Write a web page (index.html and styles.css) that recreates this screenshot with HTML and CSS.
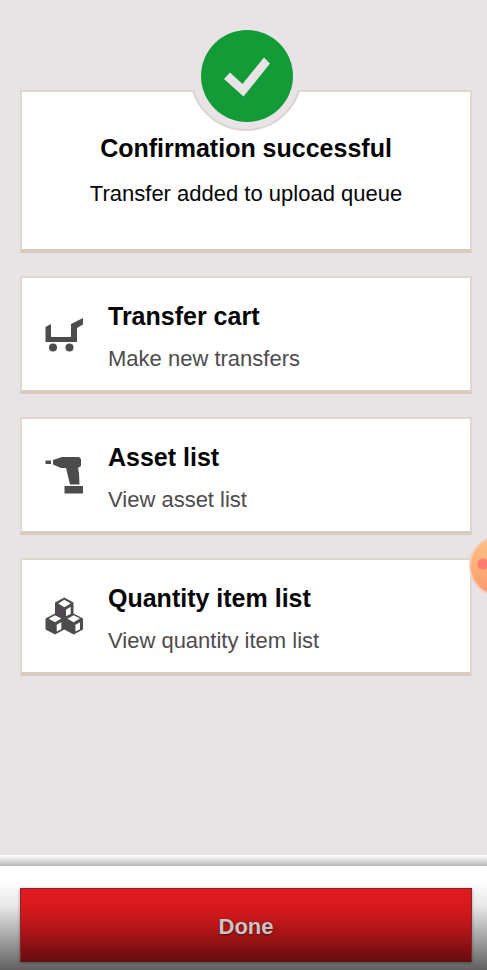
FILE: index.html
```html
<!DOCTYPE html>
<html lang="en">
<head>
<meta charset="utf-8">
<meta name="viewport" content="width=device-width, initial-scale=1">
<title>Confirmation</title>
<link rel="stylesheet" href="styles.css">
</head>
<body>
<main class="content">
  <section class="card confirmation">
    <svg class="badge" viewBox="0 0 114 114" aria-hidden="true">
      <defs><clipPath id="notch"><rect x="0" y="72" width="114" height="42"/></clipPath></defs>
      <circle cx="57" cy="57" r="55" fill="#e8e4e5"/>
      <circle cx="57" cy="57" r="55" fill="none" stroke="#ddd3cf" stroke-width="2" clip-path="url(#notch)"/>
      <circle cx="58" cy="58" r="46" fill="#129b37"/>
      <path d="M35 61L41 54.500L53.500 66L75 39.500L81 45.500L54.500 78.500Z" fill="#e8e4e5"/>
    </svg>
    <h1 class="title">Confirmation successful</h1>
    <p class="message">Transfer added to upload queue</p>
  </section>
  <a class="card option" href="#cart">
    <svg class="icon" viewBox="0 0 40 40" aria-hidden="true">
      <path d="M1.500 13L7 10V23H27V10L39 4V10.500L33 14V28H1.500Z"/>
      <circle cx="9" cy="33.500" r="4"/><circle cx="25.500" cy="33.500" r="4"/>
    </svg>
    <span class="text"><strong class="title">Transfer cart</strong><span class="detail">Make new transfers</span></span>
  </a>
  <a class="card option" href="#assets">
    <svg class="icon" viewBox="0 0 40 40" aria-hidden="true">
      <path d="M1.500 5.500H7V9H1.500ZM9 5L18 2H35L37 4V11L34 13L35 18L35.500 29.500H26L22 13H17L9 9.500ZM20.500 31H39V38.500H20.500Z"/>
    </svg>
    <span class="text"><strong class="title">Asset list</strong><span class="detail">View asset list</span></span>
  </a>
  <a class="card option" href="#quantities">
    <svg class="icon" viewBox="0 0 40 40" aria-hidden="true">
      <path d="M20.300 1.500L29.500 6.500V17.500L39 22.500V33.500L29.700 38.500L20.300 33.500L11 38.500L1.500 33.500V22.500L11 17.500V6.500Z"/>
      <path class="face" d="M20.300 3.800L26.700 7.500L20.300 11.200L14.300 7.500ZM22 13.800L26.700 10.800V17.800L22 20.200ZM11 19.200L17.300 22.500L11 26.200L4.700 22.800ZM12.700 28.800L17.300 26.200V33.200L12.700 35.500ZM29.700 19.200L36 22.500L29.700 26.200L23.400 22.800ZM31.400 28.800L36 26.200V33.200L31.400 35.500Z"/>
    </svg>
    <span class="text"><strong class="title">Quantity item list</strong><span class="detail">View quantity item list</span></span>
  </a>
</main>
<button class="bubble" type="button" aria-label="Open assistant"></button>
<footer class="footer"><button class="done" type="button">Done</button></footer>
</body>
</html>
```
FILE: styles.css
```css
* { box-sizing: border-box; }
body {
  margin: 0;
  min-height: 100vh;
  display: flex;
  flex-direction: column;
  background: #e8e4e5;
  color: #050505;
  font-family: "Liberation Sans", Arial, sans-serif;
}
.content {
  flex: 1;
  display: flex;
  flex-direction: column;
  gap: 23px;
  padding: 90px 15px 24px 20px;
}
.card {
  position: relative;
  background: #fff;
  border: 2px solid #e0d7d2;
  border-bottom: 4px solid #d8cbbf;
}
.confirmation {
  padding: 40px 16px 43px;
  text-align: center;
}
.badge {
  position: absolute;
  top: -74px;
  left: 50%;
  width: 114px;
  height: 114px;
  margin-left: -57px;
}
.title {
  margin: 0;
  font-size: 25px;
  line-height: 32px;
  font-weight: 700;
}
.message {
  margin: 18px 0 0;
  font-size: 22px;
  line-height: 24px;
}
.option {
  display: flex;
  align-items: center;
  gap: 24px;
  height: 118px;
  padding: 0 22px;
  color: inherit;
  text-decoration: none;
}
.icon {
  flex: none;
  width: 40px;
  height: 40px;
  fill: #4d4b4e;
}
.face { fill: #fff; }
.text {
  display: flex;
  flex-direction: column;
  gap: 15px;
  padding-top: 2px;
}
.detail {
  color: #4e4b4d;
  font-size: 22px;
  line-height: 24px;
}
.bubble {
  position: absolute;
  top: 535px;
  right: 0;
  width: 18px;
  height: 58px;
  padding: 0;
  border: 0;
  background: none;
  overflow: hidden;
}
.bubble::before {
  content: "";
  position: absolute;
  top: 0;
  left: 0;
  width: 58px;
  height: 58px;
  border: 2px solid #f3cdbb;
  border-radius: 50%;
  background: radial-gradient(circle at 12px 27px, #fd7c70 5px, transparent 6px), linear-gradient(#fbc283, #fb9a6c);
}
.footer {
  padding: 33px 15px 8px 20px;
  background: linear-gradient(#fff, #bcb8ba) top / 100% 11px no-repeat, linear-gradient(#fff 11px, #fff 25px, #e6e6e6 52px, #aaa 80px, #606060 115px);
}
.done {
  display: block;
  width: 100%;
  height: 74px;
  padding: 4px 0 0;
  border: 1px solid #8b2427;
  border-bottom-color: #5f1214;
  background: linear-gradient(#e11b20, #d3191d 30%, #a81417 62%, #650c0e);
  box-shadow: 0 1px 3px #0005;
  color: #c9c5c5;
  font: 700 22px/28px "Liberation Sans", Arial, sans-serif;
  text-shadow: 0 1px 2px #0008;
}
```
